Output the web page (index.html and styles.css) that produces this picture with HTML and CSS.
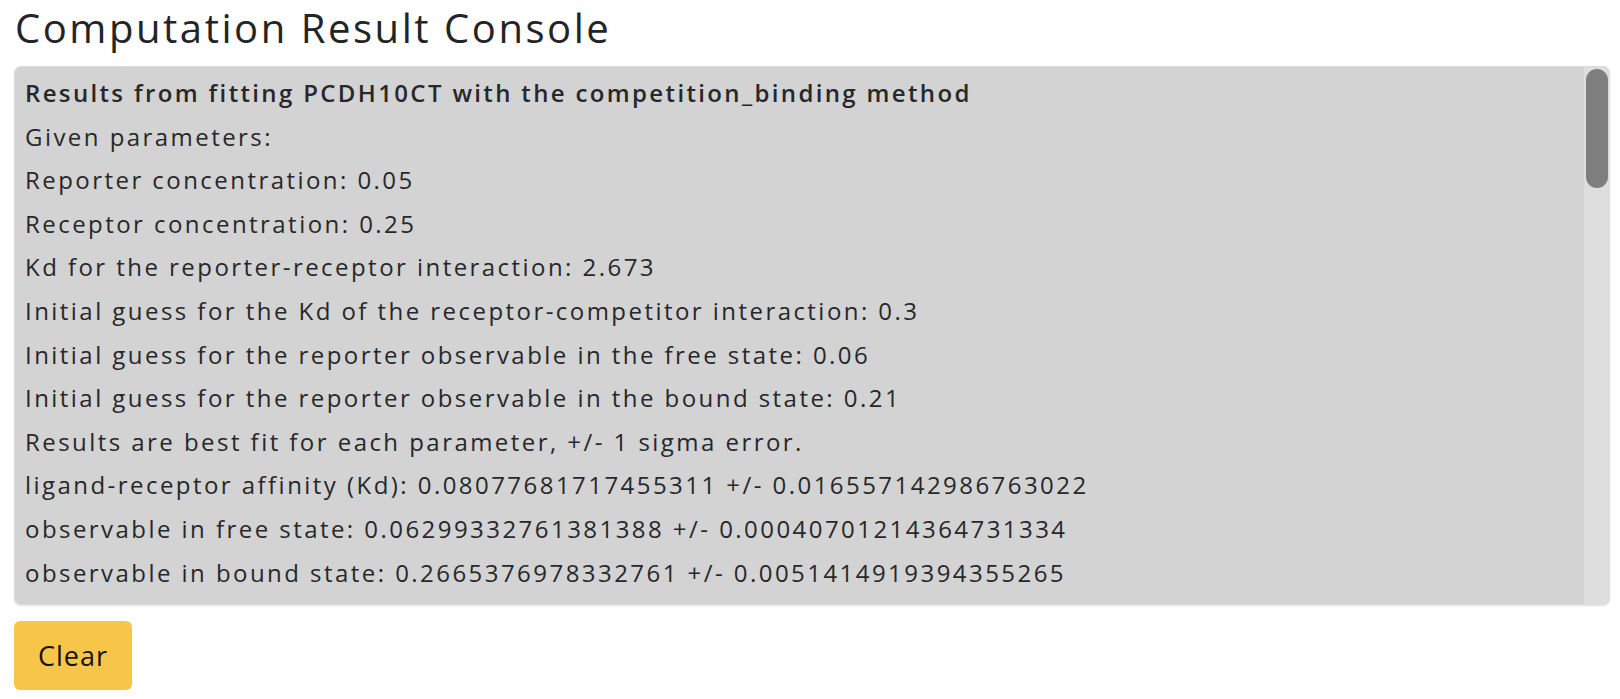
FILE: index.html
```html
<!DOCTYPE html>
<html lang="en">
<head>
<meta charset="utf-8">
<title>Computation Result Console</title>
<link rel="stylesheet" href="styles.css">
</head>
<body>
<main class="page">
  <h1 class="title">Computation Result Console</h1>
  <section class="console">
    <div class="console-body">
      <p class="line line-head">Results from fitting PCDH10CT with the competition_binding method</p>
      <p class="line">Given parameters:</p>
      <p class="line">Reporter concentration: 0.05</p>
      <p class="line">Receptor concentration: 0.25</p>
      <p class="line">Kd for the reporter-receptor interaction: 2.673</p>
      <p class="line">Initial guess for the Kd of the receptor-competitor interaction: 0.3</p>
      <p class="line">Initial guess for the reporter observable in the free state: 0.06</p>
      <p class="line">Initial guess for the reporter observable in the bound state: 0.21</p>
      <p class="line">Results are best fit for each parameter, +/- 1 sigma error.</p>
      <p class="line">ligand-receptor affinity (Kd): 0.08077681717455311 +/- 0.016557142986763022</p>
      <p class="line">observable in free state: 0.06299332761381388 +/- 0.00040701214364731334</p>
      <p class="line">observable in bound state: 0.2665376978332761 +/- 0.0051414919394355265</p>
    </div>
    <div class="scrollbar" aria-hidden="true">
      <div class="scroll-thumb"></div>
    </div>
  </section>
  <button class="btn-clear" type="button">Clear</button>
</main>
</body>
</html>
```
FILE: styles.css
```css
* { box-sizing: border-box; }
html, body { margin: 0; padding: 0; background: #ffffff; }
body {
  font-family: "Open Sans", "Lato", sans-serif;
  color: #222427;
}
.page {
  display: flex;
  flex-direction: column;
  align-items: flex-start;
  padding: 0 10px 0 14px;
}
.title {
  margin: 0;
  font-size: 40px;
  font-weight: 400;
  letter-spacing: 2.55px;
  line-height: 55px;
  height: 66px;
  padding-left: 1px;
  color: #222427;
}
.console {
  display: flex;
  width: 100%;
  height: 539px;
  background: #d3d3d3;
  border: 1px solid #dcdcdc;
  border-radius: 7px;
  box-shadow: 0 1px 2px rgba(0,0,0,0.12);
  overflow: hidden;
}
.console-body {
  flex: 1;
  min-width: 0;
  overflow: hidden;
  padding: 4px 10px 0 10px;
}
.scrollbar {
  flex: 0 0 25px;
  background: #dedede;
  padding: 2px 1px 0 2px;
}
.scroll-thumb {
  height: 119px;
  background: #7e7e7e;
  border-radius: 11px;
}
.line {
  margin: 0;
  font-size: 24px;
  letter-spacing: 2.45px;
  line-height: 43.6px;
  white-space: nowrap;
  color: #26282b;
}
.line-head { font-weight: 600; letter-spacing: 2.35px; }
.btn-clear {
  margin-top: 16px;
  width: 118px;
  height: 69px;
  background: #f7c548;
  border: none;
  border-radius: 6px;
  font-family: "Open Sans", "Lato", sans-serif;
  font-size: 27px;
  letter-spacing: 1px;
  color: #141414;
  padding: 0;
}
```
